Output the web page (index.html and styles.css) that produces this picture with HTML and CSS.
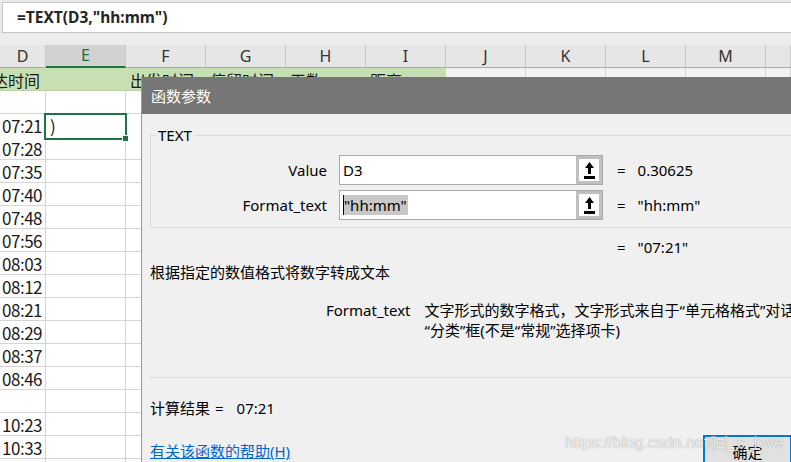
FILE: index.html
```html
<!DOCTYPE html>
<html lang="zh-CN">
<head>
<meta charset="utf-8">
<title>函数参数</title>
<link rel="stylesheet" href="styles.css">
</head>
<body>
<div class="app">
  <div class="fbar"><div class="finput">=TEXT(D3,"hh:mm")</div></div>
  <div class="gap"></div>
  <div class="sheet">
    <div class="row hdr">
      <div class="c">D</div><div class="c sel">E</div><div class="c">F</div><div class="c">G</div><div class="c">H</div><div class="c">I</div><div class="c">J</div><div class="c">K</div><div class="c">L</div><div class="c">M</div><div class="c"></div>
    </div>
    <div class="row green">
      <div class="c g rt">到达时间</div><div class="c g"></div><div class="c g">出发时间</div><div class="c g">停留时间</div><div class="c g">天数</div><div class="c g">距离</div><div class="c lt"></div><div class="c lt"></div><div class="c lt"></div><div class="c lt"></div><div class="c lt"></div>
    </div>
    <div class="row"><div class="c rt"></div><div class="c"></div><div class="c"></div><div class="c"></div><div class="c"></div><div class="c"></div><div class="c"></div><div class="c"></div><div class="c"></div><div class="c"></div><div class="c"></div></div>
    <div class="row"><div class="c rt">07:21</div><div class="c active">)<span class="selbox"><span class="handle"></span></span></div><div class="c"></div><div class="c"></div><div class="c"></div><div class="c"></div><div class="c"></div><div class="c"></div><div class="c"></div><div class="c"></div><div class="c"></div></div>
    <div class="row"><div class="c rt">07:28</div><div class="c"></div><div class="c"></div><div class="c"></div><div class="c"></div><div class="c"></div><div class="c"></div><div class="c"></div><div class="c"></div><div class="c"></div><div class="c"></div></div>
    <div class="row"><div class="c rt">07:35</div><div class="c"></div><div class="c"></div><div class="c"></div><div class="c"></div><div class="c"></div><div class="c"></div><div class="c"></div><div class="c"></div><div class="c"></div><div class="c"></div></div>
    <div class="row"><div class="c rt">07:40</div><div class="c"></div><div class="c"></div><div class="c"></div><div class="c"></div><div class="c"></div><div class="c"></div><div class="c"></div><div class="c"></div><div class="c"></div><div class="c"></div></div>
    <div class="row"><div class="c rt">07:48</div><div class="c"></div><div class="c"></div><div class="c"></div><div class="c"></div><div class="c"></div><div class="c"></div><div class="c"></div><div class="c"></div><div class="c"></div><div class="c"></div></div>
    <div class="row"><div class="c rt">07:56</div><div class="c"></div><div class="c"></div><div class="c"></div><div class="c"></div><div class="c"></div><div class="c"></div><div class="c"></div><div class="c"></div><div class="c"></div><div class="c"></div></div>
    <div class="row"><div class="c rt">08:03</div><div class="c"></div><div class="c"></div><div class="c"></div><div class="c"></div><div class="c"></div><div class="c"></div><div class="c"></div><div class="c"></div><div class="c"></div><div class="c"></div></div>
    <div class="row"><div class="c rt">08:12</div><div class="c"></div><div class="c"></div><div class="c"></div><div class="c"></div><div class="c"></div><div class="c"></div><div class="c"></div><div class="c"></div><div class="c"></div><div class="c"></div></div>
    <div class="row"><div class="c rt">08:21</div><div class="c"></div><div class="c"></div><div class="c"></div><div class="c"></div><div class="c"></div><div class="c"></div><div class="c"></div><div class="c"></div><div class="c"></div><div class="c"></div></div>
    <div class="row"><div class="c rt">08:29</div><div class="c"></div><div class="c"></div><div class="c"></div><div class="c"></div><div class="c"></div><div class="c"></div><div class="c"></div><div class="c"></div><div class="c"></div><div class="c"></div></div>
    <div class="row"><div class="c rt">08:37</div><div class="c"></div><div class="c"></div><div class="c"></div><div class="c"></div><div class="c"></div><div class="c"></div><div class="c"></div><div class="c"></div><div class="c"></div><div class="c"></div></div>
    <div class="row"><div class="c rt">08:46</div><div class="c"></div><div class="c"></div><div class="c"></div><div class="c"></div><div class="c"></div><div class="c"></div><div class="c"></div><div class="c"></div><div class="c"></div><div class="c"></div></div>
    <div class="row"><div class="c rt"></div><div class="c"></div><div class="c"></div><div class="c"></div><div class="c"></div><div class="c"></div><div class="c"></div><div class="c"></div><div class="c"></div><div class="c"></div><div class="c"></div></div>
    <div class="row"><div class="c rt">10:23</div><div class="c"></div><div class="c"></div><div class="c"></div><div class="c"></div><div class="c"></div><div class="c"></div><div class="c"></div><div class="c"></div><div class="c"></div><div class="c"></div></div>
    <div class="row"><div class="c rt">10:33</div><div class="c"></div><div class="c"></div><div class="c"></div><div class="c"></div><div class="c"></div><div class="c"></div><div class="c"></div><div class="c"></div><div class="c"></div><div class="c"></div></div>
    <div class="row"><div class="c rt"></div><div class="c"></div><div class="c"></div><div class="c"></div><div class="c"></div><div class="c"></div><div class="c"></div><div class="c"></div><div class="c"></div><div class="c"></div><div class="c"></div></div>
  </div>

  <div class="dialog">
    <div class="dtitle">函数参数</div>
    <div class="dbody">
      <fieldset class="group">
        <legend>TEXT</legend>
        <div class="arg first">
          <div class="alabel">Value</div>
          <div class="ainput"><span class="atext">D3</span><span class="refbtn"><span class="refin"><svg width="13" height="18" viewBox="0 0 13 18"><path d="M6.5 1 L11 7 L8 7 L8 13 L5 13 L5 7 L2 7 Z" fill="#000"/><rect x="1" y="15" width="11" height="3" fill="#000"/></svg></span></span></div>
          <div class="eq">=</div>
          <div class="aval">0.30625</div>
        </div>
        <div class="arg">
          <div class="alabel">Format_text</div>
          <div class="ainput"><span class="atext"><span class="caret"></span><span class="hl">"hh:mm"</span></span><span class="refbtn"><span class="refin"><svg width="13" height="18" viewBox="0 0 13 18"><path d="M6.5 1 L11 7 L8 7 L8 13 L5 13 L5 7 L2 7 Z" fill="#000"/><rect x="1" y="15" width="11" height="3" fill="#000"/></svg></span></span></div>
          <div class="eq">=</div>
          <div class="aval">"hh:mm"</div>
        </div>
      </fieldset>
      <div class="result-row"><span class="eq">=</span><span class="aval">"07:21"</span></div>
      <div class="fdesc">根据指定的数值格式将数字转成文本</div>
      <div class="argdesc">
        <div class="adname">Format_text</div>
        <div class="adtext">文字形式的数字格式，文字形式来自于“单元格格式”对话框中的<br>“分类”框(不是“常规”选择项卡)</div>
      </div>
      <div class="sep"></div>
      <div class="calc"><span>计算结果</span><span class="ceq">=</span><span class="cval">07:21</span></div>
      <div class="footer">
        <a class="help" href="#">有关该函数的帮助(H)</a>
        <div class="okbtn">确定</div>
      </div>
    </div>
  </div>
  <div class="watermark">https://blog.csdn.net/jzj_c_love</div>
</div>
</body>
</html>
```

FILE: styles.css
```css
html, body {
  margin: 0;
  padding: 0;
}
body {
  width: 791px;
  height: 462px;
  overflow: hidden;
  background: #ffffff;
  font-family: "Noto Sans", "Noto Sans CJK SC", sans-serif;
}
.app {
  position: relative;
  width: 791px;
  height: 462px;
  overflow: hidden;
}
.fbar {
  height: 34px;
  box-sizing: border-box;
  padding: 2px 0 0 2px;
  background: #e9e9e9;
}
.finput {
  height: 31px;
  box-sizing: border-box;
  border: 1px solid #c6c6c6;
  border-right: none;
  background: #ffffff;
  padding-left: 14px;
  font-weight: bold;
  font-size: 15.5px;
  line-height: 29px;
  color: #262626;
}
.gap {
  height: 11px;
  background: #ececec;
}
.row {
  display: grid;
  grid-template-columns: 46px repeat(9, 80px) 25px;
  height: 23px;
}
.c {
  box-sizing: border-box;
  border-right: 1px solid #d4d4d4;
  border-bottom: 1px solid #d4d4d4;
  font-family: "Noto Sans CJK SC", sans-serif;
  font-size: 17px;
  letter-spacing: -0.5px;
  line-height: 24px;
  color: #1a1a1a;
  white-space: nowrap;
  overflow: hidden;
  padding-left: 4px;
  background: #ffffff;
}
.hdr .c {
  background: #e6e6e6;
  border-right: 1px solid #c9c9c9;
  border-bottom: 1px solid #ababab;
  text-align: center;
  padding-left: 0;
  font-family: "Noto Sans", sans-serif;
  font-size: 16px;
  letter-spacing: 0;
  line-height: 22px;
  color: #333333;
}
.hdr .c.sel {
  background: #d2d2d2;
  border-bottom: 2px solid #217346;
  color: #1e6b41;
  line-height: 21px;
}
.c.rt {
  display: flex;
  justify-content: flex-end;
  padding-left: 0;
  padding-right: 3px;
}
.green .c.g {
  background: #c6e0b4;
  font-size: 16px;
  letter-spacing: 0;
  border-right-color: #c6e0b4;
  border-bottom-color: #b9d3a8;
}
.green .c.g.rt {
  padding-right: 5px;
}
.green .c.lt {
  background: #f2f2f2;
}
.c.active {
  position: relative;
  overflow: visible;
  z-index: 2;
}
.selbox {
  position: absolute;
  left: -2px;
  top: -1px;
  right: -2px;
  bottom: -2px;
  border: 2px solid #217346;
}
.handle {
  position: absolute;
  right: -4px;
  bottom: -4px;
  width: 5px;
  height: 5px;
  background: #217346;
  border: 1px solid #ffffff;
}

/* dialog */
.dialog {
  position: absolute;
  left: 141px;
  top: 77px;
  width: 650px;
  bottom: 0;
  background: #f0f0f0;
  border-left: 1px solid #9a9a9a;
  overflow: hidden;
  z-index: 5;
  font-size: 15px;
  color: #000000;
}
.dtitle {
  height: 37px;
  box-sizing: border-box;
  background: #767676;
  color: #ffffff;
  padding: 9px 0 0 9px;
  line-height: 20px;
}
.dbody {
  padding-left: 8px;
  line-height: 20px;
}
.group {
  margin: 11px 0 0 0;
  padding: 0 0 7px 0;
  border: 1px solid #dadada;
  border-right: none;
  min-width: 0;
}
.group legend {
  margin-left: 5px;
  padding: 0 2px;
  line-height: 20px;
}
.arg {
  display: flex;
  align-items: center;
  height: 30px;
  margin-top: 5px;
}
.arg.first {
  margin-top: 10px;
}
.alabel {
  width: 176px;
  text-align: right;
  margin-right: 12px;
}
.ainput {
  width: 264px;
  height: 30px;
  box-sizing: border-box;
  border: 1px solid #a9a9a9;
  background: #ffffff;
  display: flex;
}
.atext {
  flex: 1;
  padding-left: 3px;
  display: flex;
  align-items: center;
}
.caret {
  width: 1px;
  height: 20px;
  background: #000000;
}
.hl {
  background: #c8c8c8;
  line-height: 20px;
  padding-right: 1px;
}
.refbtn {
  width: 26px;
  box-sizing: border-box;
  background: #bfbfbf;
  padding: 3px;
  display: flex;
}
.refin {
  flex: 1;
  background: #ffffff;
  display: flex;
  align-items: center;
  justify-content: center;
}
.eq {
  margin-left: 14px;
}
.aval {
  margin-left: 12px;
}
.result-row {
  margin-top: 9px;
  padding-left: 453px;
  display: flex;
}
.fdesc {
  margin-top: 5px;
}
.argdesc {
  margin-top: 18px;
  padding-left: 176px;
  display: flex;
  gap: 14px;
}
.adtext {
  white-space: nowrap;
}
.sep {
  margin-top: 37px;
  height: 1px;
  background: #d8d8d8;
}
.calc {
  margin-top: 20px;
  display: flex;
}
.ceq {
  margin-left: 5px;
}
.cval {
  margin-left: 13px;
}
.footer {
  margin-top: 17px;
  display: flex;
  align-items: flex-start;
}
.help {
  margin-top: 6px;
  color: #0066cc;
  text-decoration: underline;
}
.okbtn {
  margin-left: auto;
  width: 89px;
  height: 36px;
  box-sizing: border-box;
  border: 2px solid #0078d7;
  background: #e1e1e1;
  text-align: center;
  padding-top: 5px;
}
.watermark {
  position: absolute;
  left: 565px;
  top: 433px;
  z-index: 10;
  font-family: "Liberation Sans", sans-serif;
  font-size: 16px;
  line-height: 20px;
  color: rgba(255, 255, 255, 0.85);
  text-shadow: 0 0 1px rgba(0, 0, 0, 0.45);
  white-space: nowrap;
}
```
